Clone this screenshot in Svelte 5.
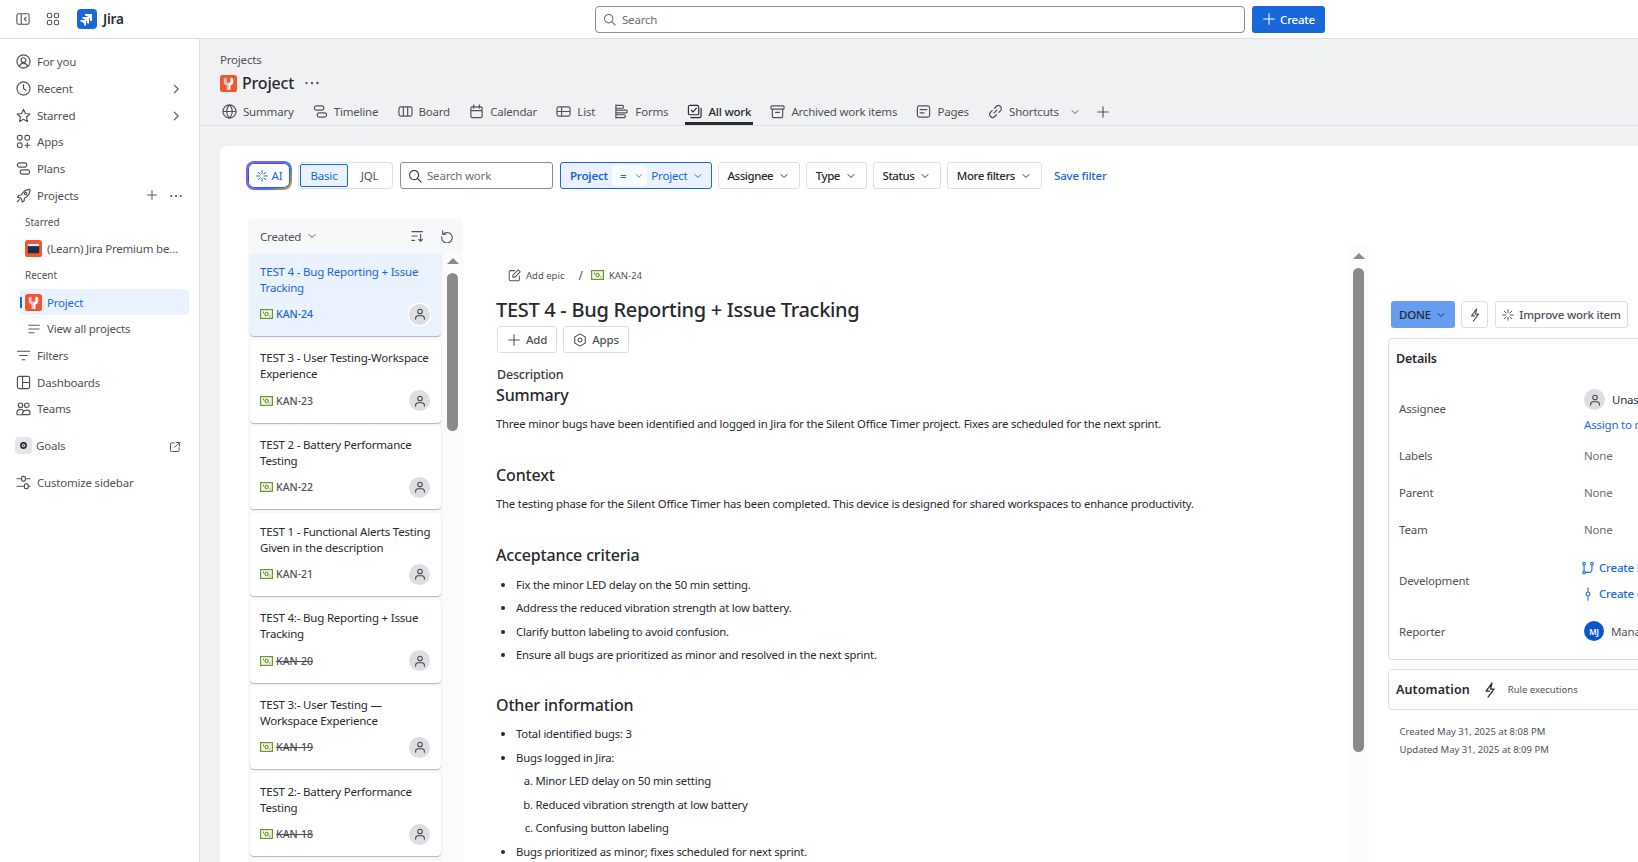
<script>
const C=(x,y,r)=>`M${x-r} ${y}a${r} ${r} 0 1 0 ${2*r} 0a${r} ${r} 0 1 0 ${-2*r} 0z`;
const R=(x,y,w,h,r=1.5)=>`M${x+r} ${y}h${w-2*r}a${r} ${r} 0 0 1 ${r} ${r}v${h-2*r}a${r} ${r} 0 0 1 ${-r} ${r}h${-(w-2*r)}a${r} ${r} 0 0 1 ${-r} ${-r}v${-(h-2*r)}a${r} ${r} 0 0 1 ${r} ${-r}z`;
const I={
 side:R(1,2,14,12,2)+'M6 2v12M11.5 6 9.5 8l2 2',
 grid:R(1.5,1.5,5,5,2)+R(9.5,1.5,5,5,2)+R(1.5,9.5,5,5,2)+R(9.5,9.5,5,5,2),
 foryou:C(8,8,7)+C(8,6.5,2.5)+'M3.5 13.2c1-2.5 2.5-3.4 4.5-3.4s3.5.9 4.5 3.4',
 clock:C(8,8,7)+'M8 3.8V8l2.8 2',
 star:'M8 1.5l2 4.4 4.8.5-3.6 3.2 1 4.8L8 12l-4.2 2.4 1-4.8L1.2 6.4 6 5.9z',
 apps:R(1.5,1.5,5,5,2)+R(9.5,1.5,5,5,2)+R(1.5,9.5,5,5,2)+'M12 9.5v5M9.5 12h5',
 plans:R(1.5,2,10,4.5,2)+R(4.5,9.5,10,4.5,2),
 rocket:'M14.5 1.5c-4 .2-6.8 2-9 6L3 7.8 1.5 10l3 .4 1.6 1.6.4 3 2.2-1.5.3-2.5c4-2.2 5.8-5 6-9z'+C(10.2,5.8,1.2)+'M3.5 12.5l-2 2',
 filters:'M1.5 3.5h13M4 8h8M6.5 12.5h3',
 dash:R(1.5,1.5,13,13,2)+'M7 1.5v13M7 8h7.5',
 teams:C(4.8,4.5,2.4)+C(11.5,4.5,2.4)+'M1 14v-1.6C1 10.3 2.8 9 4.8 9c1.4 0 2.7.6 3.3 1.7M8 14.5c-1 0-1.5-.6-1-1.7.8-1.8 2.6-3 4.5-3s3.5 1.2 3.5 3v.2c0 1-.5 1.5-1.3 1.5zM1 14c0 .4.4.7 1 .7h5',
 ext:'M7 2.5H3a1 1 0 0 0-1 1V13a1 1 0 0 0 1 1h9.5a1 1 0 0 0 1-1V9M9.5 2H14v4.5M14 2 7.5 8.5',
 custom:'M1 4h5M10 4h5M1 12h8M13 12h2'+R(6,1.5,4,5,1.5)+R(9,9.5,4,5,1.5),
 lines:'M1 3h14M1 8h14M1 13h7',
 globe:C(8,8,7)+'M1 8h14M8 1c-4 4-4 10 0 14M8 1c4 4 4 10 0 14',
 board:R(1,3,14,10,2)+'M5.7 3v10M10.3 3v10',
 cal:R(2,3,12,11.5,1.5)+'M2 7h12M5 1v3.5M11 1v3.5',
 list:R(1,3,14,10,2)+'M1 8h14M6 3v10',
 forms:'M2 1v14'+R(2,1.5,8,3,1)+R(2,6.5,12,3,1)+R(2,11.5,10,3,1),
 allwork:R(1.5,1.5,11,10,1.5)+'M4.5 6.5l2 2 3.5-4M15 4.5V13a1.5 1.5 0 0 1-1.5 1.5H4',
 archive:R(1,2,14,3.5,1)+'M2.5 5.5V13a1.5 1.5 0 0 0 1.5 1.5h8a1.5 1.5 0 0 0 1.5-1.5V5.5M6 9h4',
 page:R(1.5,2,13,12,2)+'M4.5 6h7M4.5 9.5h4',
 link:'M6.5 9.5l3-3M7 4.5l1.8-1.8a3 3 0 0 1 4.5 4.5L11.5 9M9 11.5l-1.8 1.8a3 3 0 0 1-4.5-4.5L4.5 7',
 chev:'M4 6l4 4 4-4',
 chevr:'M6 3.5 10.5 8 6 12.5',
 plus:'M8 2v12M2 8h12',
 search:C(7,7,5.2)+'M11 11l4 4',
 spark:'M8 1v4M8 11v4M1 8h4M11 8h4M3 3l2.5 2.5M10.5 10.5 13 13M13 3l-2.5 2.5M5.5 10.5 3 13',
 sort:'M1 3h12M1 8h6M1 13h3M11 6v8M8.8 11.8 11 14l2.2-2.2',
 undo:'M3 2v4h4M3.4 6A6 6 0 1 1 2 9',
 edit:'M14 8.5V13a1.5 1.5 0 0 1-1.5 1.5H3A1.5 1.5 0 0 1 1.5 13V3.5A1.5 1.5 0 0 1 3 2h5M6 10V7.5L12.5 1 15 3.5 8.5 10z',
 hex:'M8 1l6 3.5v7L8 15l-6-3.5v-7z'+C(8,8,2.3),
 bolt:'M10 1 4 9h3.5M6 15l6-8H8.5L10 1',
 pr:C(3.5,3,1.5)+C(12.5,3,1.5)+C(3.5,13,1.5)+'M3.5 4.5v7M12.5 4.5V10a3 3 0 0 1-3 3H5',
 commit:C(8,8,2.2)+'M8 1v4.8M8 10.2V15',
 more:C(2.5,8,.55)+C(8,8,.55)+C(13.5,8,.55)
};
const nav1=[['foryou','For you'],['clock','Recent',1],['star','Starred',1],['apps','Apps'],['plans','Plans']];
const tabs=[['globe','Summary'],['plans','Timeline'],['board','Board'],['cal','Calendar'],['list','List'],['forms','Forms'],['allwork','All work'],['archive','Archived work items'],['page','Pages'],['link','Shortcuts']];
const cards=[
 [['TEST 4 - Bug Reporting + Issue','Tracking'],'KAN-24',0,1],
 [['TEST 3 - User Testing-Workspace','Experience'],'KAN-23'],
 [['TEST 2 - Battery Performance','Testing'],'KAN-22'],
 [['TEST 1 - Functional Alerts Testing','Given in the description'],'KAN-21'],
 [['TEST 4:- Bug Reporting + Issue','Tracking'],'KAN-20',1],
 [['TEST 3:- User Testing —','Workspace Experience'],'KAN-19',1],
 [['TEST 2:- Battery Performance','Testing'],'KAN-18',1]
];
const filters=['Assignee','Type','Status','More filters'];
</script>

{#snippet ic(n, cls='i16')}
 <svg class={cls} viewBox="0 0 16 16" fill="none" stroke="currentColor" stroke-width="1.25" stroke-linecap="round" stroke-linejoin="round"><path d={I[n]}/></svg>
{/snippet}
{#snippet wrench(cls)}
 <svg class={cls} viewBox="0 0 18 18"><rect width="18" height="18" rx="3" fill="#f4552d"/><path d="M4 3.5V8c0 1.500 1 2.500 3 3v5h2V8H7V3z" fill="#c9ccd1"/><path d="M14 3.500V8c0 1.500-1 2.500-3 3v5H9V8h2V3z" fill="#fff"/></svg>
{/snippet}
{#snippet tag()}
 <svg class="tag" viewBox="0 0 13 10"><rect x=".6" y=".6" width="11.8" height="8.8" fill="#f3f8e8" stroke="#6a9a23" stroke-width="1.2"/><circle cx="6.6" cy="5" r="1.7" fill="none" stroke="#5b7f24" stroke-width="1"/><rect x="3" y="2.6" width="1" height="1.6" fill="#5b7f24"/><rect x="9.4" y="6.4" width="1" height="1.2" fill="#5b7f24"/></svg>
{/snippet}
{#snippet person(cls='av')}
 <span class={cls}><svg viewBox="0 0 16 16" fill="none" stroke="#44464c" stroke-width="1.2" stroke-linecap="round"><circle cx="8" cy="5.2" r="2.6"/><path d="M3 14v-1.2C3 11 4.4 10 6 10h4c1.6 0 3 1 3 2.8V14"/></svg></span>
{/snippet}

<div class="app">
 <header class="top">
  <div class="tl">
   <span class="tbi">{@render ic('side','i14')}</span>
   <span class="tbi">{@render ic('grid','i14')}</span>
   <svg class="logo" viewBox="0 0 20 20"><rect width="20" height="20" rx="4" fill="#1868db"/><path d="M8 5h7v7h-1.8c0-2.8-2.4-5.2-5.2-5.200z M5.500 8h6.500v6.500h-1.700c0-2.600-2.200-4.800-4.800-4.800z M3.500 11h5.500v5.500h-1.600c0-2.200-1.700-3.900-3.900-3.900z" fill="#fff"/></svg>
   <b class="jira">Jira</b>
  </div>
  <div class="searchbar">{@render ic('search','i13')}<span>Search</span></div>
  <button class="create">{@render ic('plus','i14')}Create</button>
 </header>
 <div class="body">
  <aside>
   {#each nav1 as n}
    <div class="nav"><span class="ni">{@render ic(n[0])}</span><span class="nt">{n[1]}</span>{#if n[2]}<span class="nr">{@render ic('chevr','i14')}</span>{/if}</div>
   {/each}
   <div class="nav"><span class="ni">{@render ic('rocket')}</span><span class="nt">Projects</span><span class="pplus">{@render ic('plus','i12')}</span><span class="nr">{@render ic('more','i14')}</span></div>
   <div class="nav lab">Starred</div>
   <div class="nav sub"><svg class="pav" viewBox="0 0 18 18"><rect width="18" height="18" rx="3" fill="#f4552d"/><rect x="3" y="4" width="12" height="10" rx="1" fill="#1f2d4d"/><rect x="3" y="4" width="12" height="2.500" fill="#dfe3ea"/></svg><span class="nt">(Learn) Jira Premium be...</span></div>
   <div class="nav lab">Recent</div>
   <div class="nav sub sel"><i class="bar"></i>{@render wrench('pav')}<span class="nt">Project</span></div>
   <div class="nav sub vall"><span class="vi">{@render ic('lines','i12')}</span><span class="nt">View all projects</span></div>
   <div class="nav"><span class="ni">{@render ic('filters')}</span><span class="nt">Filters</span></div>
   <div class="nav"><span class="ni">{@render ic('dash')}</span><span class="nt">Dashboards</span></div>
   <div class="nav"><span class="ni">{@render ic('teams')}</span><span class="nt">Teams</span></div>
   <div class="nav goals"><span class="gi"><svg viewBox="0 0 16 16"><circle cx="8" cy="8" r="3.200" fill="none" stroke="#292a2e" stroke-width="2"/><circle cx="8" cy="8" r="1" fill="#292a2e"/></svg></span><span class="nt">Goals</span><span class="nr">{@render ic('ext','i12')}</span></div>
   <div class="nav cust"><span class="ni">{@render ic('custom')}</span><span class="nt">Customize sidebar</span></div>
  </aside>
  <main>
   <div class="phead">
    <div class="crumb">Projects</div>
    <div class="ptitle">{@render wrench('pbig')}<h1>Project</h1><span class="big">{@render ic('more','i16')}</span></div>
    <nav class="tabs">
     {#each tabs as t}
      <div class="tab" class:active={t[1]==='All work'}>{@render ic(t[0],'i15')}<span>{t[1]}</span></div>
     {/each}
     <span class="tchev">{@render ic('chev','i12')}</span>
     <span class="tplus">{@render ic('plus','i14')}</span>
    </nav>
   </div>
   <section class="panel">
    <div class="frow">
     <button class="ai">{@render ic('spark','i12')}AI</button>
     <div class="seg"><span class="on">Basic</span><span class="off">JQL</span></div>
     <div class="fsearch">{@render ic('search','i14')}<span>Search work</span></div>
     <div class="fproj"><b>Project</b><span class="eq">={@render ic('chev','i10')}</span><span>Project</span>{@render ic('chev','i12')}</div>
     {#each filters as f}
      <button class="fb">{f}{@render ic('chev','i12')}</button>
     {/each}
     <a class="save" href="#top">Save filter</a>
    </div>
    <div class="content">
     <div class="col">
      <div class="colh"><span class="cr">Created {@render ic('chev','i12')}</span><span class="sp"></span><span class="hi">{@render ic('sort','i14')}</span><span class="hi">{@render ic('undo','i14')}</span></div>
      <div class="colb">
       <div class="cards">
        {#each cards as c}
         <article class="card" class:cur={c[3]}>
          <div class="ct">{c[0][0]}<br/>{c[0][1]}</div>
          <div class="cf">{@render tag()}<span class="key" class:strike={c[2]}>{c[1]}</span><span class="sp"></span>{@render person(c[3]?'av ring':'av')}</div>
         </article>
        {/each}
       </div>
       <div class="sb sb1"><i class="arr"></i><i class="thumb"></i></div>
      </div>
     </div>
     <div class="detail">
      <div class="bc">{@render ic('edit','i13')}<span>Add epic</span><em>/</em>{@render tag()}<span>KAN-24</span></div>
      <h2 class="title">TEST 4 - Bug Reporting + Issue Tracking</h2>
      <div class="abtns"><button>{@render ic('plus','i14')}Add</button><button>{@render ic('hex','i14')}Apps</button></div>
      <div class="dlab">Description</div>
      <h3 class="h0">Summary</h3>
      <p class="p0">Three minor bugs have been identified and logged in Jira for the Silent Office Timer project. Fixes are scheduled for the next sprint.</p>
      <h3 class="h1">Context</h3>
      <p class="p1">The testing phase for the Silent Office Timer has been completed. This device is designed for shared workspaces to enhance productivity.</p>
      <h3 class="h2">Acceptance criteria</h3>
      <ul>
       <li>Fix the minor LED delay on the 50 min setting.</li>
       <li>Address the reduced vibration strength at low battery.</li>
       <li>Clarify button labeling to avoid confusion.</li>
       <li>Ensure all bugs are prioritized as minor and resolved in the next sprint.</li>
      </ul>
      <h3 class="h3">Other information</h3>
      <ul class="ul2">
       <li>Total identified bugs: 3</li>
       <li>Bugs logged in Jira:
        <ol>
         <li>Minor LED delay on 50 min setting</li>
         <li>Reduced vibration strength at low battery</li>
         <li>Confusing button labeling</li>
        </ol>
       </li>
       <li>Bugs prioritized as minor; fixes scheduled for next sprint.</li>
      </ul>
     </div>
     <div class="sb sb2"><i class="arr"></i><i class="thumb"></i></div>
     <div class="right">
      <div class="ract">
       <button class="done">DONE {@render ic('chev','i12')}</button>
       <button class="rb boltb">{@render ic('bolt','i14')}</button>
       <button class="rb imp">{@render ic('spark','i12')}Improve work item</button>
      </div>
      <div class="box details">
       <div class="dh">Details</div>
       <div class="rows">
        <div class="r r-ass"><span class="rl">Assignee</span><div class="rv"><div class="un">{@render person()}<span class="dark">Unassigned</span></div><a href="#top">Assign to me</a></div></div>
        <div class="r"><span class="rl">Labels</span><span class="none">None</span></div>
        <div class="r"><span class="rl">Parent</span><span class="none">None</span></div>
        <div class="r"><span class="rl">Team</span><span class="none">None</span></div>
        <div class="r r-dev"><span class="rl">Development</span><div class="rv devv"><a href="#top">{@render ic('pr','i14')}Create branch</a><a href="#top">{@render ic('commit','i14')}Create commit</a></div></div>
        <div class="r"><span class="rl">Reporter</span><div class="un"><span class="mj">MJ</span><span class="rep">Manager John</span></div></div>
       </div>
      </div>
      <div class="box auto"><b>Automation</b>{@render ic('bolt','i16')}<span>Rule executions</span></div>
      <div class="stamps"><div>Created May 31, 2025 at 8:08 PM</div><div>Updated May 31, 2025 at 8:09 PM</div></div>
     </div>
    </div>
   </section>
  </main>
 </div>
</div>

<style>
:global(body){margin:0;background:#fff}
.app{width:1638px;height:862px;overflow:hidden;display:flex;flex-direction:column;font-family:"Noto Sans","Open Sans",sans-serif;font-size:11.5px;letter-spacing:-.2px;color:#292a2e}
button{font:inherit;letter-spacing:inherit;color:inherit;background:#fff;cursor:pointer}
a{color:#1868db;text-decoration:none}
svg{display:block;flex:none}
.i16{width:16px;height:16px}.i15{width:15px;height:15px}.i14{width:14px;height:14px}.i13{width:13px;height:13px}.i12{width:12px;height:12px}.i10{width:10px;height:10px}
.sp{flex:1}
.top{height:38px;flex:none;border-bottom:1px solid #dcdfe4;display:flex;align-items:center;box-sizing:content-box}
.tl{width:595px;display:flex;align-items:center;padding-left:16px;box-sizing:border-box;color:#505258}
.tbi{width:14px;margin-right:16px}
.logo{width:20px;height:20px;margin-left:1px;margin-right:6px}
.jira{font-size:13.5px;font-weight:600;color:#292a2e}
.searchbar{width:650px;height:27px;box-sizing:border-box;border:1px solid #8c8f97;border-radius:4px;display:flex;align-items:center;gap:6px;padding-left:7px;color:#6b6e76}
.create{margin-left:7px;width:73px;height:27px;border:0;border-radius:3px;background:#1868db;color:#fff;font-weight:500;display:flex;align-items:center;justify-content:center;gap:4px}
.body{flex:1;display:flex;min-height:0}
aside{width:199px;flex:none;border-right:1px solid #dcdfe4;padding-top:9.5px;color:#505258;box-sizing:content-box}
.nav{height:26.7px;display:flex;align-items:center;position:relative;padding-left:16px;padding-right:10px}
.ni{width:15px;margin-right:6px;display:block}
.ni svg{width:15px;height:15px}
.nt{white-space:nowrap}
.nr{position:absolute;left:169px;top:7px}
.pplus{position:absolute;left:146px;top:7px}
.lab{padding-left:25px;font-size:10px;letter-spacing:0}
.sub{padding-left:25px}
.pav{width:17px;height:17px;margin-right:5px}
.sel{margin-left:20px;width:169px;padding-left:5px;box-sizing:border-box;background:#e9f2fe;border-radius:4px;color:#1868db}
.bar{position:absolute;left:0;top:8px;width:2px;height:11px;background:#1868db}
.vi{width:12px;margin:0 7px 0 3px}
.goals{margin-top:10.5px}
.gi{width:17px;height:17px;background:#e4e5e8;border-radius:4px;margin:0 4px 0 -1px;padding:2px;box-sizing:border-box}
.goals .nr{top:8px}
.cust{margin-top:10px}
main{flex:1;min-width:0;background:#f0f1f2;display:flex;flex-direction:column}
.phead{height:86px;flex:none;border-bottom:1px solid #dcdfe4;padding-left:20px;box-sizing:content-box;color:#505258}
.crumb{margin-top:12px;height:18px;line-height:18px}
.ptitle{display:flex;align-items:center;height:26px;margin-top:1px}
.pbig{width:17px;height:17px;margin-right:5px}
h1{margin:0;font-size:16px;font-weight:500;color:#292a2e;letter-spacing:-.2px}
.big{margin-left:10px;color:#505258}
.tabs{display:flex;align-items:stretch;height:26px;margin-top:3px}
.tab{display:flex;align-items:center;gap:6px;padding:2px 2px 0;margin-right:15.2px;box-sizing:border-box;border-bottom:3px solid transparent}
.tab.active{color:#292a2e;border-bottom-color:#292a2e;font-weight:500}
.tchev{align-self:center;margin-left:-7.5px;margin-right:15px}
.tplus{align-self:center}
.panel{flex:1;margin:20px 0 0 20px;background:#fff;border-radius:8px 0 0 0;min-height:0;padding:15px 0 0 26px;box-sizing:border-box;display:flex;flex-direction:column;overflow:hidden}
.frow{display:flex;align-items:center;height:29px;flex:none}
.ai{width:46px;height:29px;box-sizing:border-box;border:2px solid transparent;border-radius:8px;background:linear-gradient(#fff,#fff) padding-box,linear-gradient(135deg,#8f5be8 0,#8f5be8 45%,#3a7be8 65%,#e8a317 100%) border-box;color:#1868db;display:flex;align-items:center;justify-content:center;gap:4px;padding:0;box-shadow:inset 0 0 0 1px #1868db;margin-right:6px}
.seg{width:95px;height:27px;box-sizing:border-box;border:1px solid #dcdfe4;border-radius:4px;display:flex;align-items:center;padding:1px;margin-right:7px}
.seg .on{width:48px;height:23px;box-sizing:border-box;border:1px solid #1868db;border-radius:2px;background:#e9f2fe;color:#1868db;display:flex;align-items:center;justify-content:center}
.seg .off{flex:1;text-align:center;color:#505258}
.fsearch{width:153px;height:27px;box-sizing:border-box;border:1px solid #8c8f97;border-radius:3px;display:flex;align-items:center;gap:5px;padding-left:7px;color:#6b6e76;margin-right:7px}
.fsearch svg{color:#292a2e}
.fproj{width:152px;height:27px;box-sizing:border-box;border:1px solid #1868db;border-radius:3px;background:#e9f2fe;color:#1868db;display:flex;align-items:center;padding-left:9px;gap:4px;margin-right:6px}
.fproj b{font-weight:600}
.eq{background:#f8fbff;border-radius:3px;height:21px;padding:0 3px 0 8px;display:flex;align-items:center;gap:8px}
.fb{height:27px;box-sizing:border-box;border:1px solid #dcdfe4;border-radius:3px;padding:0 8.5px;display:flex;align-items:center;gap:5px;margin-right:6.5px;font-weight:500;letter-spacing:-.45px}
.save{margin-left:6px;color:#1868db;font-weight:500}
.content{flex:1;display:flex;margin-top:29px;min-height:0;align-items:flex-start}
.col{width:215px;flex:none;margin-left:2px;background:#f7f8f9;border-radius:4px 4px 0 0;height:700px}
.colh{height:34px;display:flex;align-items:center;padding:0 9px 0 12px;color:#505258;box-sizing:border-box}
.cr{display:flex;align-items:center;gap:5px}
.hi{margin-left:15px}
.colb{display:flex}
.cards{width:195px;padding-left:2px;box-sizing:border-box}
.card{height:83px;background:#fff;border-radius:4px;box-shadow:0 1px 1px rgba(9,30,66,.3);margin-bottom:3.7px;padding:10.5px 11px 0 10px;box-sizing:border-box;width:191px}
.card.cur{background:#e9f2fe}
.cur .ct,.cur .key{color:#1868db}
.ct{line-height:16px;height:32px;white-space:nowrap}
.cf{display:flex;align-items:center;gap:3px;margin-top:6.5px;height:24px;font-size:10.500px;color:#505258}
.key{font-weight:500;letter-spacing:0}
.strike{text-decoration:line-through}
.tag{width:13px;height:10px}
.av{width:21px;height:21px;border-radius:50%;background:#dddee1;display:block;padding:3.5px;box-sizing:border-box}
.ring{box-shadow:0 0 0 1.500px #fff}
.sb{width:20px;flex:none;background:#fbfbfb;position:relative}
.sb1{height:640px;margin-top:-2px}
.arr{display:block;width:0;height:0;border:6.500px solid transparent;border-top:0;border-bottom:6.500px solid #8a8a8a;position:absolute;left:3.500px;top:7px}
.thumb{display:block;width:11px;position:absolute;left:4px;background:#8a8a8a;border-radius:6px}
.sb1 .thumb{top:22px;height:158px}
.detail{width:853px;flex:none;margin-left:33px;padding-top:46px;box-sizing:border-box}
.bc{display:flex;align-items:center;height:20px;font-size:9.500px;letter-spacing:0;color:#505258;padding-left:12px;gap:5px}
.bc em{font-style:normal;margin:0 3px 0 9px;font-size:12px}
.title{margin:10px 0 0;font-size:20px;font-weight:500;line-height:30px;letter-spacing:-.3px}
.abtns{display:flex;gap:6px;margin-top:1px;padding-left:1px}
.abtns button{height:27px;box-sizing:border-box;border:1px solid #dcdfe4;border-radius:3px;display:flex;align-items:center;gap:5px;padding:0 9px;font-weight:500;color:#505258}
.dlab{margin:12px 0 0 1px;line-height:20px;font-weight:500;font-size:12.500px;color:#3b3d42}
h3{margin:0;font-size:16px;font-weight:500;line-height:24px;letter-spacing:-.15px}
.h0{line-height:21px}
p{margin:0;line-height:20px;font-size:11.3px}
.p0{margin-top:8px}
.h1{margin-top:29px}
.p1{margin-top:7px}
.h2{margin-top:29px}
ul{margin:5.500px 0 0;padding-left:20px;line-height:23.500px;font-size:11.3px}
.h3{margin-top:26px}
ol{margin:0;padding-left:19.500px;list-style:lower-alpha}
.sb2{height:660px;margin-top:27px}
.sb2 .thumb{top:22px;height:484px}
.right{margin-left:19px;width:400px;flex:none;padding-top:82px;box-sizing:border-box}
.ract{display:flex;align-items:center;height:27px;padding-left:3px}
.done{height:27px;width:64px;border:0;border-radius:3px;background:#669df1;font-weight:500;display:flex;align-items:center;justify-content:center;gap:4px;padding:0}
.rb{height:27px;box-sizing:border-box;border:1px solid #dcdfe4;border-radius:3px;display:flex;align-items:center;justify-content:center;color:#505258;padding:0}
.boltb{width:27px;margin:0 7px 0 6px}
.imp{width:133px;gap:5px;font-weight:500}
.box{border:1px solid #dcdfe4;border-radius:4px;box-sizing:border-box}
.details{margin-top:10px;height:322px;padding:10px 0 0 7px}
.dh{font-weight:600;line-height:20px;font-size:12.500px}
.rows{display:flex;flex-direction:column;gap:17px;margin-top:20px;padding-left:3px}
.r{display:flex;align-items:center;min-height:20px;color:#505258}
.rl{width:185px;flex:none}
.r-ass{height:39px}
.rv{display:flex;flex-direction:column}
.r-ass .rv{align-self:flex-start}
.un{display:flex;align-items:center;gap:7px}
.dark{color:#292a2e}
.rv>a{margin-top:7px;line-height:15px}
.r-dev{height:48px}
.r-dev .rv{padding-top:2px}
.devv{gap:6px}
.rv.devv a{display:flex;align-items:center;gap:4px;line-height:20px;margin:0 0 0 -3px;font-weight:500}
.none{color:#6b6e76}
.mj{width:20px;height:20px;border-radius:50%;background:#0c55c9;color:#fff;font-size:8px;font-weight:600;display:flex;align-items:center;justify-content:center}
.auto{margin-top:9px;height:41px;display:flex;align-items:center;padding-left:7px}
.auto b{font-weight:600;font-size:12.500px;margin-right:12px;letter-spacing:.1px}
.auto span{margin-left:10px;font-size:9.500px;letter-spacing:0;color:#505258}
.stamps{margin-top:13px;padding-left:11.5px;font-size:9.500px;letter-spacing:0;line-height:18px;color:#505258}
</style>
